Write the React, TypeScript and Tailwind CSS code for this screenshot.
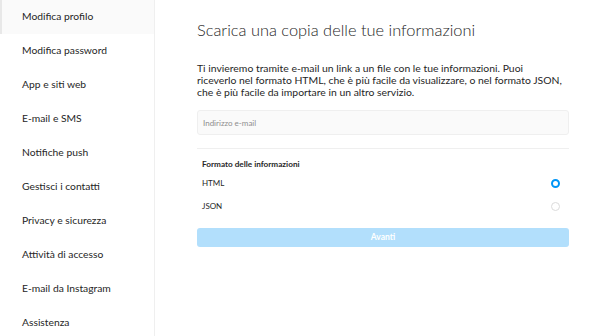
const MENU = [
  "Modifica profilo",
  "Modifica password",
  "App e siti web",
  "E-mail e SMS",
  "Notifiche push",
  "Gestisci i contatti",
  "Privacy e sicurezza",
  "Attività di accesso",
  "E-mail da Instagram",
  "Assistenza",
]

const Radio = ({ checked }: { checked?: boolean }) =>
  checked ? (
    <span className="w-[9px] h-[9px] rounded-full border-[2.5px] border-[#0095f6] bg-white" />
  ) : (
    <span className="w-[9px] h-[9px] rounded-full border border-[#dbdbdb] bg-white" />
  )

export default function App() {
  return (
    <div className="flex w-[610px] h-[336px] bg-white overflow-hidden font-['Lato',sans-serif] text-[#262626]">
      <nav className="w-[155px] shrink-0 border-r border-[#efefef] flex flex-col">
        {MENU.map((label, i) => (
          <div
            key={label}
            className={
              i === 0
                ? "h-[34px] shrink-0 flex items-center pl-[20px] border-l-2 border-[#e8e8e8] bg-[#fafafa] text-[10.3px]"
                : "h-[34px] shrink-0 flex items-center pl-[22px] text-[10.3px]"
            }
          >
            {label}
          </div>
        ))}
      </nav>

      <main className="flex-1 pl-[42px] pr-[41px] pt-[17px]">
        <h1 className="text-[16.4px] font-light leading-[26px]">
          Scarica una copia delle tue informazioni
        </h1>
        <p className="mt-[19px] text-[10.4px] leading-[12px] text-[#262626]">
          Ti invieremo tramite e-mail un link a un file con le tue informazioni. Puoi
          <br />
          riceverlo nel formato HTML, che è più facile da visualizzare, o nel formato JSON,
          <br />
          che è più facile da importare in un altro servizio.
        </p>

        <div className="mt-[12px] h-[25px] border border-[#efefef] bg-[#fafafa] rounded-[3px] flex items-center pl-[5px] text-[8px] text-[#8e8e8e]">
          Indirizzo e-mail
        </div>

        <div className="mt-[13px] border-t border-[#efefef]" />

        <div className="mt-[9px] pl-[5px] text-[8.2px] font-bold leading-[12px]">Formato delle informazioni</div>
        <div className="mt-[7px] h-[12px] flex items-center justify-between pl-[5px] pr-[9px] text-[8px]">
          <span>HTML</span>
          <Radio checked />
        </div>
        <div className="mt-[11px] h-[12px] flex items-center justify-between pl-[5px] pr-[9px] text-[8px]">
          <span>JSON</span>
          <Radio />
        </div>

        <button className="mt-[16px] w-full h-[19px] rounded-[3px] bg-[#b2dffc] text-white text-[8.5px] font-bold flex items-center justify-center">
          Avanti
        </button>
      </main>
    </div>
  )
}
